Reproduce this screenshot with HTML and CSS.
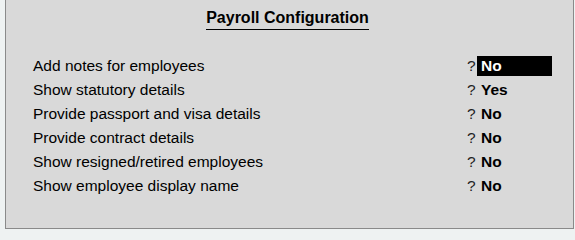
FILE: index.html
```html
<!DOCTYPE html>
<html>
<head>
<meta charset="utf-8">
<link rel="stylesheet" href="styles.css">
</head>
<body>
<div class="panel">
  <div class="title-wrap"><h1 class="title">Payroll Configuration</h1></div>
  <div class="rows">
    <div class="label">Add notes for employees</div><div class="q">?</div><div class="val"><span class="sel">No</span></div>
    <div class="label">Show statutory details</div><div class="q">?</div><div class="val"><span>Yes</span></div>
    <div class="label">Provide passport and visa details</div><div class="q">?</div><div class="val"><span>No</span></div>
    <div class="label">Provide contract details</div><div class="q">?</div><div class="val"><span>No</span></div>
    <div class="label">Show resigned/retired employees</div><div class="q">?</div><div class="val"><span>No</span></div>
    <div class="label">Show employee display name</div><div class="q">?</div><div class="val"><span>No</span></div>
  </div>
</div>
</body>
</html>
```
FILE: styles.css
```css
html, body {
  margin: 0;
  padding: 0;
}
body {
  background: #eef2f2;
  width: 575px;
  height: 230px;
  overflow: hidden;
  font-family: "Liberation Sans", Arial, sans-serif;
  color: #000;
}
.panel {
  box-sizing: border-box;
  margin-left: 5px;
  width: 569px;
  height: 229px;
  background: #d9d9d9;
  border-left: 1px solid #8a8a8a;
  border-right: 1px solid #8a8a8a;
  border-bottom: 1px solid #8a8a8a;
  padding-top: 9px;
}
.title-wrap {
  display: flex;
  justify-content: center;
  padding-right: 4px;
}
.title {
  margin: 0;
  font-size: 16px;
  font-weight: bold;
  line-height: 18px;
  padding-bottom: 2px;
  border-bottom: 1px solid #000;
}
.rows {
  margin-top: 24px;
  padding-left: 27px;
  padding-right: 21px;
  display: grid;
  grid-template-columns: 1fr 11px 75px;
  grid-auto-rows: 24px;
  font-size: 15.5px;
  line-height: 24px;
}
.q {
  color: #222;
  padding-left: 1px;
}
.val {
  display: flex;
  align-items: center;
}
.val span {
  display: block;
  width: 100%;
  height: 20px;
  line-height: 20px;
  padding-left: 4px;
  font-weight: bold;
}
.val .sel {
  background: #000;
  color: #fff;
}
```
